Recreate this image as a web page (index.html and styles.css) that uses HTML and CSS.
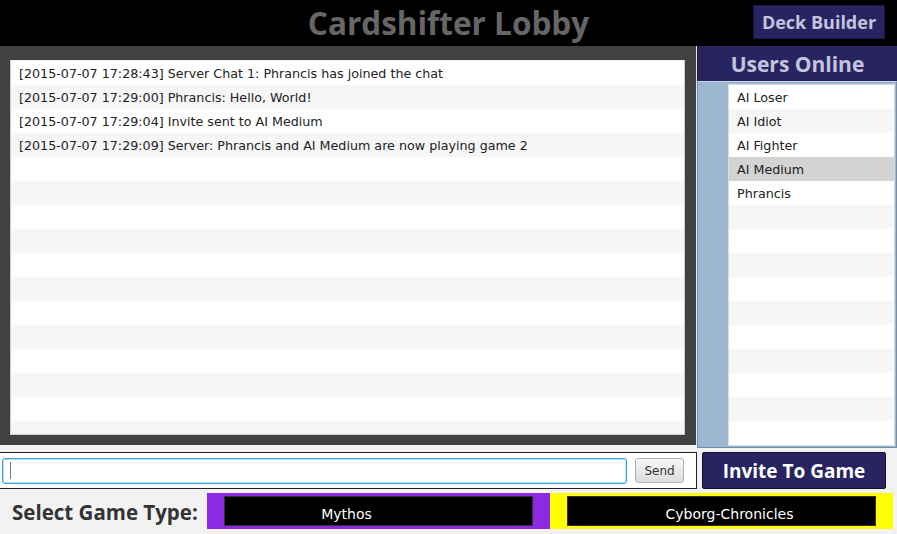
FILE: index.html
```html
<!DOCTYPE html>
<html>
<head>
<meta charset="utf-8">
<link rel="stylesheet" href="styles.css">
</head>
<body>
<div class="app">
  <header class="topbar">
    <div></div>
    <h1 class="title">Cardshifter Lobby</h1>
    <button class="deck-btn">Deck Builder</button>
  </header>
  <main class="main">
    <section class="chat">
      <ul class="chat-list">
        <li>[2015-07-07 17:28:43] Server Chat 1: Phrancis has joined the chat</li>
        <li>[2015-07-07 17:29:00] Phrancis: Hello, World!</li>
        <li>[2015-07-07 17:29:04] Invite sent to AI Medium</li>
        <li>[2015-07-07 17:29:09] Server: Phrancis and AI Medium are now playing game 2</li>
        <li></li><li></li><li></li><li></li><li></li><li></li><li></li><li></li><li></li><li></li><li></li><li></li>
      </ul>
    </section>
    <aside class="users">
      <div class="users-head">Users Online</div>
      <div class="users-body">
        <ul class="users-list">
          <li>AI Loser</li>
          <li>AI Idiot</li>
          <li>AI Fighter</li>
          <li class="selected">AI Medium</li>
          <li>Phrancis</li>
          <li></li><li></li><li></li><li></li><li></li><li></li><li></li><li></li><li></li><li></li>
        </ul>
      </div>
    </aside>
  </main>
  <section class="bottom">
    <div class="send-row">
      <div class="send-box">
        <div class="msg-input"><span class="caret"></span></div>
        <button class="send-btn">Send</button>
      </div>
      <button class="invite-btn">Invite To Game</button>
    </div>
    <div class="type-row">
      <span class="type-label">Select Game Type:</span>
      <div class="game mythos"><div class="game-inner">Mythos</div></div>
      <div class="game cyborg"><div class="game-inner">Cyborg-Chronicles</div></div>
    </div>
  </section>
</div>
</body>
</html>
```

FILE: styles.css
```css
html, body {
  margin: 0;
  padding: 0;
}
body {
  width: 897px;
  height: 534px;
  overflow: hidden;
  background: #f2f2f2;
  font-family: "DejaVu Sans", "Liberation Sans", sans-serif;
}
.app {
  display: flex;
  flex-direction: column;
  height: 534px;
}
.topbar {
  height: 46px;
  background: #000;
  display: grid;
  grid-template-columns: 1fr auto 1fr;
  align-items: center;
}
.title {
  margin: 0;
  font-family: "Open Sans", sans-serif;
  font-weight: 700;
  font-size: 31.5px;
  color: #666;
  line-height: 46px;
}
.deck-btn {
  justify-self: end;
  margin-right: 12px;
  margin-top: -3px;
  width: 132px;
  height: 34px;
  background: #282462;
  border: 1px solid #1a1845;
  border-radius: 1px;
  color: #c4c4dc;
  font-family: "Open Sans", sans-serif;
  font-weight: 700;
  font-size: 18px;
  padding: 0;
}
.main {
  display: flex;
  height: 399px;
}
.chat {
  width: 696px;
  background: #414141;
  padding: 14px 11px 10px 10px;
  box-sizing: border-box;
}
.chat-list, .users-list {
  list-style: none;
  margin: 0;
  padding: 0;
  height: 100%;
  overflow: hidden;
  background: #fff;
}
.chat-list {
  border: 1px solid #cfcfcf;
  box-sizing: border-box;
  border-top-color: #eee;
}
.chat-list li, .users-list li {
  height: 24px;
  line-height: 25px;
  font-size: 12.7px;
  color: #222;
  padding-left: 8px;
  white-space: nowrap;
}
.chat-list li:nth-child(even), .users-list li:nth-child(even) {
  background: #f6f6f6;
}
.users {
  width: 201px;
  display: flex;
  flex-direction: column;
  border-left: 1px solid #e6e6e6;
  box-sizing: border-box;
}
.users-head {
  height: 35px;
  background: #282462;
  border-left: 1px solid #222;
  color: #c4c4dc;
  font-family: "Open Sans", sans-serif;
  font-weight: 700;
  font-size: 21px;
  line-height: 36px;
  text-align: center;
}
.users-body {
  flex: 1;
  background: #9eb7d1;
  border: 1px solid #6f8fae;
  border-top-color: #c0d4e8;
  padding: 2px 1px 1px 30px;
  margin-bottom: 3px;
}
.users-list {
  border: 1px solid #d8dde2;
  box-sizing: border-box;
}
.users-list li.selected, .users-list li.selected:nth-child(even) {
  background: #d3d3d3;
}
.bottom {
  flex: 1;
  display: flex;
  flex-direction: column;
  padding-top: 7px;
}
.send-row {
  display: flex;
  align-items: center;
  height: 37px;
}
.send-box {
  width: 697px;
  height: 37px;
  box-sizing: border-box;
  border: 1px solid #222;
  border-left: none;
  background: #fff;
  display: flex;
  align-items: center;
  padding-left: 2px;
}
.msg-input {
  width: 625px;
  height: 26px;
  box-sizing: border-box;
  border: 1px solid #2ea6dc;
  border-radius: 3px;
  box-shadow: inset 0 0 0 1px #b8e2f4;
  display: flex;
  align-items: center;
  padding-left: 7px;
}
.caret {
  width: 1px;
  height: 17px;
  background: #777;
}
.send-btn {
  margin-left: 8px;
  width: 49px;
  height: 25px;
  border: 1px solid #b2b2b2;
  border-radius: 3px;
  background: linear-gradient(#f8f8f8, #dcdcdc);
  font-family: "DejaVu Sans", sans-serif;
  font-size: 12px;
  color: #333;
  padding: 0;
}
.invite-btn {
  margin-left: 5px;
  width: 184px;
  height: 37px;
  background: #282462;
  border: 1px solid #141230;
  border-radius: 2px;
  color: #fff;
  font-family: "Open Sans", sans-serif;
  font-weight: 700;
  font-size: 19px;
  padding: 0;
}
.type-row {
  display: flex;
  align-items: center;
  margin-top: 4px;
  height: 36px;
}
.type-label {
  width: 207px;
  padding-left: 12px;
  padding-top: 2px;
  box-sizing: border-box;
  font-family: "Open Sans", sans-serif;
  font-weight: 700;
  font-size: 20.5px;
  color: #333;
}
.game {
  height: 36px;
  box-sizing: border-box;
  padding: 3px 17px;
}
.mythos {
  width: 343px;
  background: #8a2be2;
}
.cyborg {
  width: 343px;
  background: #ffff00;
}
.game-inner {
  height: 30px;
  background: #000;
  border: 1px solid #333;
  box-sizing: border-box;
  color: #fff;
  font-size: 14px;
  line-height: 34px;
  text-align: center;
}
.mythos .game-inner {
  padding-right: 64px;
}
.cyborg .game-inner {
  padding-left: 16px;
}
```
